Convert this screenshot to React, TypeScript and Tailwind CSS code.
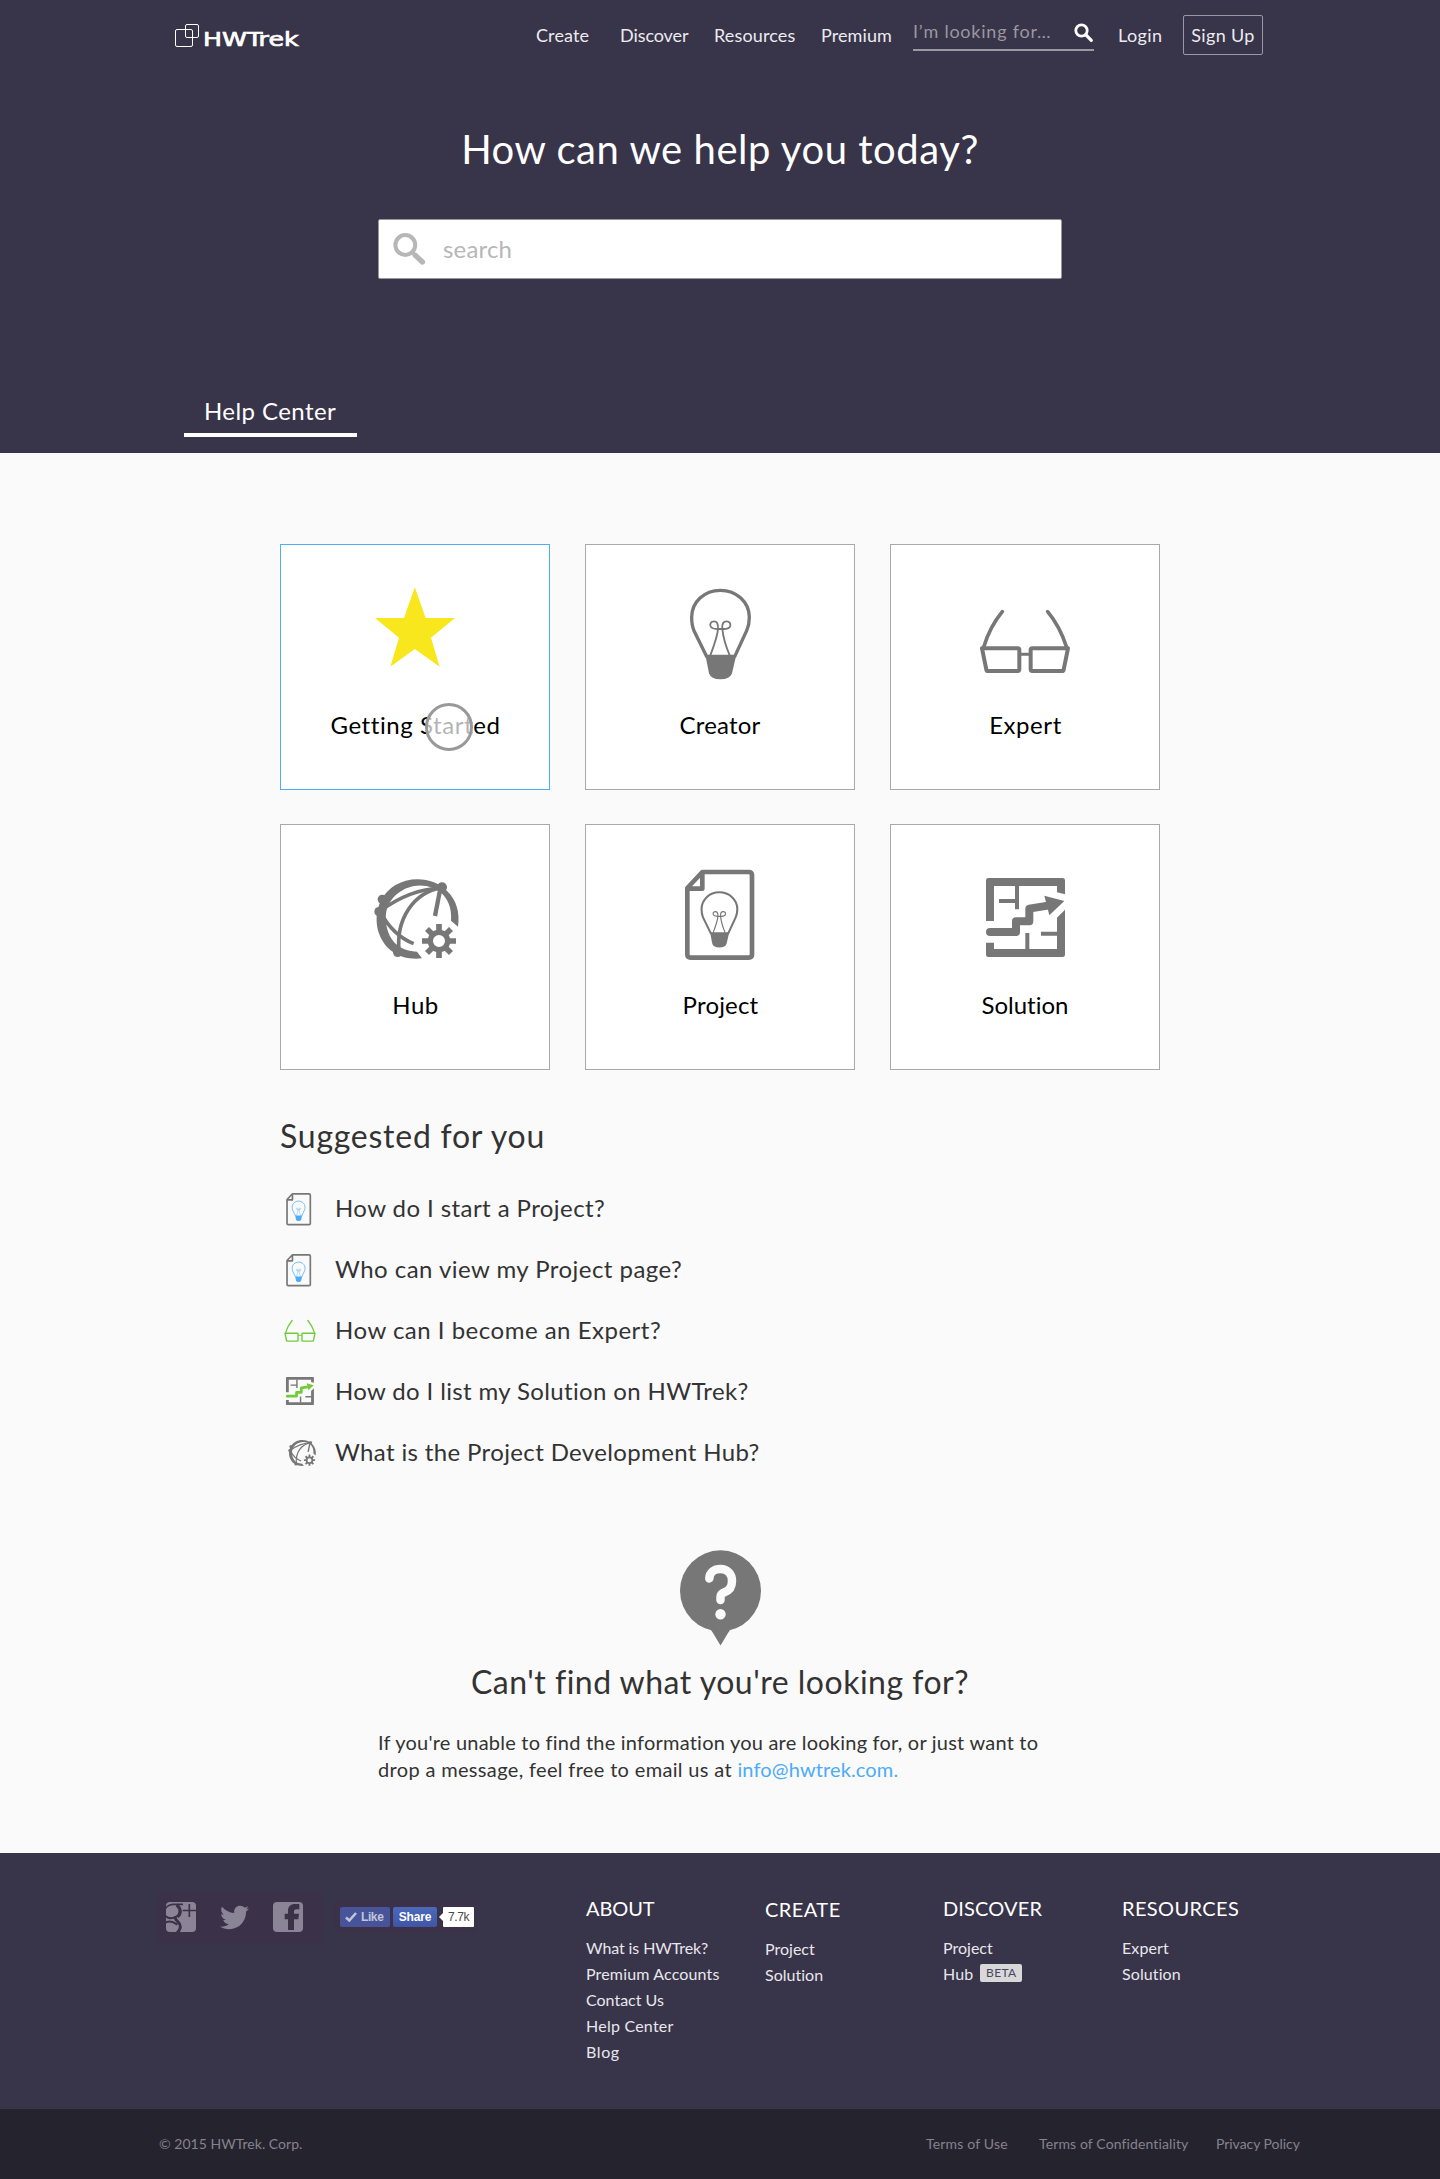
import React from "react";
import { FaTwitter } from "react-icons/fa";

const GRAY = "#777777";
const BLUE = "#4dabf7";
const GREEN = "#72cb3a";

type Tint = { color?: string; accent?: string };

function BulbShape({ color = GRAY }: Tint) {
  return (
    <g fill="none" stroke={color}>
      <path
        d="M201 292 L162 212 C156 199 155 185 155 172 C155 126 193 91 241 91 S328 126 328 172 C328 185 326 199 320 212 L283 292"
        strokeWidth="10"
      />
      <path d="M196 284 H289 L276 340 Q270 358 241 358 Q213 358 207 340 Z" fill={color} stroke="none" />
      <path
        d="M211 286 C224 252 233 228 234 206 C235 190 230 184 222 184 C213 184 210 191 211 197 C213 206 220 207 232 207 H250 C262 207 269 205 271 197 C272 190 268 184 260 184 C250 184 246 190 247 206 C249 230 258 260 269 286"
        strokeWidth="5.5"
      />
    </g>
  );
}

function FileShape({ color = GRAY, accent = GRAY }: Tint) {
  return (
    <g>
      <path
        d="M142 114 L187 66 H326 Q336 66 336 76 V313 Q336 323 326 323 H152 Q142 323 142 313 Z M142 116 H187 V66"
        fill="none"
        stroke={color}
        strokeWidth="14"
        strokeLinejoin="round"
      />
      <g transform="translate(88.6 70.6) scale(0.62)">
        <BulbShape color={accent} />
      </g>
    </g>
  );
}

function GlassesShape({ color = GRAY }: Tint) {
  return (
    <g fill="none" stroke={color} strokeWidth="12" strokeLinecap="round" strokeLinejoin="round">
      <path d="M1026 265 H1133 Q1138 265 1138 270 V328 Q1138 333 1133 333 H1044 Q1040 333 1039 329 Z" />
      <path d="M1284 265 H1177 Q1172 265 1172 270 V328 Q1172 333 1177 333 H1266 Q1270 333 1271 329 Z" />
      <path d="M1142 283 H1168" strokeWidth="9" />
      <path d="M1031 262 C1042 225 1062 185 1087 155 M1280 262 C1268 225 1248 185 1223 155" strokeWidth="11" />
    </g>
  );
}

function HubShape({ color = GRAY }: Tint) {
  return (
    <g fill="none" stroke={color}>
      <path
        d="M333 212 L354 230 C360 188 350 152 322 124 C285 84 215 76 165 106 C112 140 98 205 120 258 C138 300 180 332 246 325 L231 305 C195 304 165 290 148 255 C130 210 133 165 170 133 C215 95 275 100 310 135 C330 158 335 185 333 212 Z"
        fill={color}
        stroke="none"
      />
      <g fill={color} stroke="none">
        <circle cx="306" cy="112" r="15" />
        <circle cx="127" cy="148" r="14" />
        <circle cx="117" cy="185" r="14" />
        <circle cx="173" cy="307" r="14" />
      </g>
      <g strokeWidth="11">
        <path d="M302 114 C240 117 180 140 125 180" />
        <path d="M302 114 C222 128 168 205 177 302" />
        <path d="M126 192 C142 228 180 265 221 281" />
        <path d="M301 116 L285 198" strokeWidth="13" />
      </g>
      <circle cx="297" cy="273" r="26" strokeWidth="16" />
      <g strokeWidth="17">
        <path d="M297 222 V245 M297 301 V324 M246 273 H269 M325 273 H348" />
        <path d="M261 237 L277 253 M317 293 L333 309 M333 237 L317 253 M277 293 L261 309" />
      </g>
    </g>
  );
}

function SolutionShape({ color = GRAY, accent = GRAY }: Tint) {
  return (
    <g>
      <g fill={color}>
        <path d="M1038 213 V91 Q1038 84 1045 84 H1268 Q1275 84 1275 91 V133 L1251 127 V108 H1062 V213 Z" />
        <path d="M1038 278 H1062 V297 H1251 V203 L1275 179 V314 Q1275 321 1268 321 H1045 Q1038 321 1038 314 Z" />
      </g>
      <path d="M1131 106 V178 M1077 153 H1131 M1162 249 V299 M1203 251 H1253" stroke={color} strokeWidth="12" fill="none" />
      <path
        d="M1050 246 H1128 V214 H1168 V176 L1224 167"
        fill="none"
        stroke={accent}
        strokeWidth="24"
        strokeLinejoin="round"
      />
      <circle cx="1050" cy="246" r="12" fill={accent} />
      <path d="M1213 137 L1273 153 L1228 196 Z" fill={accent} />
    </g>
  );
}

const cards: { label: string; track: string; art: React.ReactNode; active?: boolean }[] = [
  {
    label: "Getting Started",
    track: "tracking-[0.58px] pl-px",
    active: true,
    art: (
      <g transform="translate(-10 -14) scale(0.33333)">
        <path d="M434.500 172 L467 264 H555 L483 323 L509 410 L434.500 357 L361 410 L387 323 L315 264 H402 Z" fill="#f8e71c" />
      </g>
    ),
  },
  { label: "Creator", track: "tracking-[0.2px]", art: <g transform="translate(55 16) scale(0.33333)"><BulbShape /></g> },
  { label: "Expert", track: "tracking-[0.55px] pl-px", art: <g transform="translate(-250 16) scale(0.33333)"><GlassesShape /></g> },
  { label: "Hub", track: "tracking-[0.5px] pl-px", art: <g transform="translate(60 26) scale(0.33333)"><HubShape /></g> },
  { label: "Project", track: "tracking-[0.18px] pl-px", art: <g transform="translate(55 26) scale(0.33333)"><FileShape /></g> },
  { label: "Solution", track: "tracking-[0.01px]", art: <g transform="translate(-250 26) scale(0.33333)"><SolutionShape /></g> },
];

const questions: { text: string; track: string; art: React.ReactNode }[] = [
  { text: "How do I start a Project?", track: "tracking-[0.42px]", art: <g transform="translate(30 26.6) scale(0.36)"><FileShape accent={BLUE} /></g> },
  { text: "Who can view my Project page?", track: "tracking-[0.46px]", art: <g transform="translate(30 26.6) scale(0.36)"><FileShape accent={BLUE} /></g> },
  { text: "How can I become an Expert?", track: "tracking-[0.5px]", art: <g transform="translate(-282 10.500) scale(0.348)"><GlassesShape color={GREEN} /></g> },
  { text: "How do I list my Solution on HWTrek?", track: "tracking-[0.36px]", art: <g transform="translate(-289.600 21.300) scale(0.354)"><SolutionShape accent={GREEN} /></g> },
  { text: "What is the Project Development Hub?", track: "tracking-[0.36px]", art: <g transform="translate(51 28) scale(0.328)"><HubShape /></g> },
];

function Column({ title, titleClass, className, children }: { title: string; titleClass: string; className: string; children: React.ReactNode }) {
  return (
    <div className={className}>
      <h3 className={`text-[20px] leading-6 ${titleClass}`}>{title}</h3>
      <ul className="mt-[15px] text-[16px] leading-[26px] text-[#e8e7ec]">{children}</ul>
    </div>
  );
}

function Logo() {
  return (
    <svg width="361" height="68" viewBox="175 0 361 68" role="img" aria-label="HWTrek">
      <g fill="none" stroke="#ffffff" strokeWidth="1">
        <rect x="175.500" y="29.500" width="17" height="17" rx="1.500" />
        <rect x="185.500" y="24.500" width="13" height="13" rx="1.500" />
      </g>
      <text
        x="203"
        y="45.700"
        fill="#ffffff"
        stroke="#ffffff"
        strokeWidth="0.7"
        fontFamily="'DejaVu Sans', sans-serif"
        fontSize="19"
        textLength="95.500"
        lengthAdjust="spacingAndGlyphs"
      >
        HWTrek
      </text>
    </svg>
  );
}

function SocialIcons() {
  return (
    <div className="flex h-[50px] w-[167px] items-center bg-[#3b3148] pl-[10px] pb-[2px] text-[#8b8497]">
      <svg width="30" height="30" viewBox="48 66 90 90">
        <defs>
          <clipPath id="gplus">
            <rect x="48" y="66" width="90" height="90" rx="12" />
          </clipPath>
        </defs>
        <g clipPath="url(#gplus)">
          <rect x="48" y="66" width="90" height="90" fill="currentColor" />
          <g fill="none" stroke="#3b3148">
            <path d="M99 73 H68 C56 74 50 79 46 86" strokeWidth="5" />
            <path d="M80 75 C94 86 93 102 82 110" strokeWidth="10" />
            <path d="M46 108 C56 116 70 116 82 108" strokeWidth="6" />
            <path d="M76 110 C72 122 91 124 91 140 C91 150 86 154 80 160" strokeWidth="9" />
            <path d="M44 130 C54 122 68 124 82 134" strokeWidth="6" />
            <path d="M118 72 V111 M98 91.500 H138" strokeWidth="5" />
          </g>
        </g>
      </svg>
      <FaTwitter className="ml-6 size-[29px]" />
      <svg width="30" height="30" viewBox="369 66 90 90" className="ml-6">
        <rect x="369" y="66" width="90" height="90" rx="12" fill="currentColor" />
        <path
          d="M414 150 V118 H404 V101 H414 V93 C414 79 422 72 435 72 H448 V88 H440 C434 88 432 90 432 95 V101 H447 L445 118 H432 V150 Z"
          fill="#3b3148"
        />
      </svg>
    </div>
  );
}

function ShareButtons() {
  return (
    <div className="ml-[11px] mt-2 flex h-8 w-[143px] items-start bg-[#3b3148] pl-[6px] pt-[6px] font-['Liberation_Sans',sans-serif] text-[12px] leading-5">
      <span className="flex h-5 w-[50px] items-center gap-1 rounded-[2px] bg-[#47549a] pl-[5px] font-bold tracking-[-0.4px] text-[#c3c5d9]">
        <svg width="12" height="10" viewBox="0 0 12 10">
          <path d="M1 5.500 L4.300 8.500 L11 1" fill="none" stroke="currentColor" strokeWidth="2.500" />
        </svg>
        Like
      </span>
      <span className="ml-[3px] h-5 w-[44px] rounded-[2px] bg-linear-to-b from-[#4c69ba] to-[#3f55a6] text-center font-bold tracking-[-0.2px] text-white">
        Share
      </span>
      <svg width="5" height="20" viewBox="0 0 5 20" className="ml-px">
        <path d="M5 6 L1 10 L5 14 Z" fill="#ffffff" />
      </svg>
      <span className="h-5 w-[31px] rounded-[1px] bg-white text-center tracking-[-0.4px] text-[#4a4a4a]">7.7k</span>
    </div>
  );
}

export default function App() {
  return (
    <div className="w-[1440px] bg-[#fafafa] font-['Lato',sans-serif] text-[#333333]">
      <section className="h-[453px] bg-[#383449] text-white">
        <header className="flex h-[68px] items-center pl-[175px] text-[18px] leading-6">
          <Logo />
          <nav className="flex pt-0.5 text-[#eceBf0]">
            <a className="w-[84px] tracking-[0.12px]">Create</a>
            <a className="w-[94px] tracking-[-0.08px]">Discover</a>
            <a className="w-[107px] tracking-[0.14px]">Resources</a>
            <a className="w-[92px] tracking-[0.09px]">Premium</a>
          </nav>
          <div className="-mt-0.5 flex h-[36px] w-[181px] justify-between border-b-2 border-[#9b98a4] pt-[4px] text-[#9a979f]">
            <span className="tracking-[0.77px]">I’m looking for…</span>
            <svg width="20" height="20" viewBox="0 0 20 20" className="mt-[4px] text-white">
              <circle cx="7.500" cy="7.500" r="5.700" fill="none" stroke="currentColor" strokeWidth="2.800" />
              <path d="M12 12 L17.300 17.300" stroke="currentColor" strokeWidth="3.200" strokeLinecap="round" />
            </svg>
          </div>
          <a className="ml-6 w-[65px] pt-0.5 tracking-[0.39px] text-[#eceBf0]">Login</a>
          <a className="mt-0.5 flex h-10 w-20 items-center justify-center rounded-[2px] border border-[#9b98a4] tracking-[0.33px] text-[#eceBf0]">
            Sign Up
          </a>
        </header>

        <h1 className="mt-[57px] text-center text-[40px] leading-[48px] tracking-[0.55px]">How can we help you today?</h1>

        <div className="mx-auto mt-[46px] flex h-[60px] w-[684px] items-center rounded-[2px] border border-[#999999] bg-white">
          <svg width="64" height="58" viewBox="379 220 64 58">
            <circle cx="405.300" cy="245" r="9.900" fill="none" stroke="#b7b7b7" strokeWidth="4" />
            <path d="M412.500 252.500 L415 255" stroke="#b7b7b7" strokeWidth="3" />
            <path d="M415 255 L422.500 262" stroke="#b7b7b7" strokeWidth="5.200" strokeLinecap="round" />
          </svg>
          <span className="-mt-px text-[24px] leading-8 tracking-[0.16px] text-[#b7b7b7]">search</span>
        </div>

        <div className="ml-[184px] mt-[115px] h-[43px] w-[173px] border-b-4 border-white pl-5 pt-px text-[24px] leading-8 tracking-[0.42px]">
          Help Center
        </div>
      </section>

      <main className="mx-auto w-[880px]">
        <div className="grid grid-cols-3 gap-x-[35px] gap-y-[34px] pt-[91px]">
          {cards.map((card) => (
            <div
              key={card.label}
              className={`relative h-[246px] w-[270px] border bg-white text-center ${card.active ? "border-[#4dabf7]" : "border-[#a9a9a9]"}`}
            >
              <svg width="268" height="164" viewBox="1 1 268 164">
                {card.art}
              </svg>
              <div className={`text-[24px] leading-8 text-black ${card.track}`}>{card.label}</div>
              {card.active && (
                <div className="absolute left-[144px] top-[158px] size-12 rounded-full border-[3px] border-[#999999] bg-white/70" />
              )}
            </div>
          ))}
        </div>

        <h2 className="mt-[46px] text-[32px] leading-10 tracking-[0.75px]">Suggested for you</h2>
        <ul className="mt-[21px]">
          {questions.map((q) => (
            <li key={q.text} className="flex h-[61px] items-center">
              <svg width="55" height="61" viewBox="60 0 165 183">
                {q.art}
              </svg>
              <span className={`mt-px whitespace-nowrap text-[24px] leading-8 ${q.track}`}>{q.text}</span>
            </li>
          ))}
        </ul>

        <svg width="81" height="96" viewBox="680 1550 81 96" className="mx-auto mt-[68px]">
          <circle cx="720.500" cy="1590.800" r="40.500" fill={GRAY} />
          <path d="M708 1627 Q711.500 1630 713 1633 L720.500 1645.500 L728 1633 Q729.500 1630 733 1627 Z" fill={GRAY} />
          <path
            d="M709.300 1578.500 C709.500 1572.500 714 1569 720.500 1569 C727.500 1569 732 1574 732 1581 C732 1588 728.500 1590.800 724.500 1592.300 C721.500 1593.500 720.500 1594.500 720.500 1597 V1600"
            fill="none"
            stroke="#fafafa"
            strokeWidth="8.500"
            strokeLinecap="round"
          />
          <circle cx="720.500" cy="1614.300" r="5.200" fill="#fafafa" />
        </svg>
        <h2 className="mt-[16px] text-center text-[32px] leading-10 tracking-[0.5px]">Can't find what you're looking for?</h2>
        <p className="ml-[98px] mt-[27px] whitespace-nowrap text-[20px] leading-[27px] tracking-[0.22px]">
          If you're unable to find the information you are looking for, or just want to
          <br />
          <span className="tracking-[0.34px]">drop a message, feel free to email us at </span>
          <a className="tracking-[0.13px] text-[#4dabf7]">info@hwtrek.com.</a>
        </p>
      </main>

      <footer className="mt-[70px]">
        <div className="flex h-[256px] bg-[#383449] pl-[156px] pt-10 text-white">
          <SocialIcons />
          <ShareButtons />
          <Column title="ABOUT" titleClass="tracking-[-0.1px]" className="ml-[109px] w-[179px] pt-[3px]">
            <li className="tracking-[-0.1px]">What is HWTrek?</li>
            <li className="tracking-[0.15px]">Premium Accounts</li>
            <li>Contact Us</li>
            <li className="tracking-[0.23px]">Help Center</li>
            <li className="tracking-[0.6px]">Blog</li>
          </Column>
          <Column title="CREATE" titleClass="tracking-[0.45px]" className="w-[178px] pt-[4px]">
            <li className="tracking-[0.01px]">Project</li>
            <li className="tracking-[0.02px]">Solution</li>
          </Column>
          <Column title="DISCOVER" titleClass="tracking-[0.15px]" className="w-[179px] pt-[3px]">
            <li className="tracking-[0.01px]">Project</li>
            <li className="flex items-center gap-[7px] tracking-[0.1px]">
              Hub
              <span className="-mt-0.5 h-[18px] w-[42px] rounded-[2px] bg-[#d8d8d8] text-center text-[12px] leading-[18px] tracking-[0.35px] text-[#4a4560]">
                BETA
              </span>
            </li>
          </Column>
          <Column title="RESOURCES" titleClass="tracking-[0.38px]" className="pt-[3px]">
            <li className="tracking-[0.11px]">Expert</li>
            <li className="tracking-[0.1px]">Solution</li>
          </Column>
        </div>
        <div className="flex h-[70px] items-center bg-[#25232e] pl-[159px] text-[14px] leading-5 text-[#85828d]">
          <span className="w-[767px] tracking-[0.03px]">© 2015 HWTrek. Corp.</span>
          <a className="w-[113px] tracking-[0.18px]">Terms of Use</a>
          <a className="w-[177px] tracking-[0.12px]">Terms of Confidentiality</a>
          <a className="tracking-[-0.04px]">Privacy Policy</a>
        </div>
      </footer>
    </div>
  );
}
